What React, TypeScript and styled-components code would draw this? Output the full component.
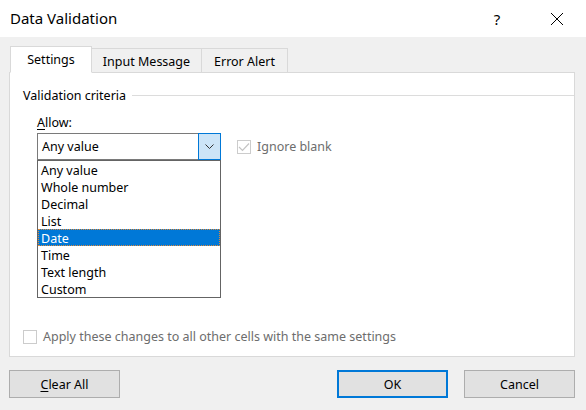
import styled, { createGlobalStyle } from 'styled-components';

const GlobalStyle = createGlobalStyle`
  html, body {
    margin: 0;
    padding: 0;
    background: #f0f0f0;
  }
  body {
    font-family: "Noto Sans", "Liberation Sans", sans-serif;
    font-size: 12.5px;
    color: #000;
  }
`;

const Dialog = styled.div`
  width: 586px;
  height: 410px;
  display: flex;
  flex-direction: column;
  background: #f0f0f0;
  overflow: hidden;
`;

const TitleBar = styled.div`
  height: 37px;
  flex: none;
  display: flex;
  align-items: center;
  background: #fff;
  padding-left: 10px;
`;

const Title = styled.div`
  flex: 1;
  font-size: 15px;
  padding-bottom: 2px;
`;

const CaptionButton = styled.div<{ $gap?: number }>`
  width: 46px;
  height: 37px;
  display: flex;
  align-items: center;
  justify-content: center;
  margin-right: ${(p) => p.$gap ?? 0}px;
  font-size: 15px;
`;

const Body = styled.div`
  flex: 1;
  display: flex;
  flex-direction: column;
  padding: 9px 11px 0 9px;
`;

const TabRow = styled.div`
  display: flex;
  align-items: flex-end;
  padding-left: 1px;
  margin-bottom: -1px;
  position: relative;
  z-index: 1;
`;

const Tab = styled.div<{ $active?: boolean; $width: number }>`
  width: ${(p) => p.$width}px;
  height: ${(p) => (p.$active ? 27 : 25)}px;
  box-sizing: border-box;
  display: flex;
  align-items: center;
  justify-content: center;
  padding-top: ${(p) => (p.$active ? 0 : 2)}px;
  border: 1px solid #d9d9d9;
  border-bottom: ${(p) => (p.$active ? '1px solid #fff' : '1px solid #d9d9d9')};
  border-left-width: ${(p) => (p.$active ? 1 : 0)}px;
  background: ${(p) => (p.$active ? '#fff' : '#f0f0f0')};
`;

const Panel = styled.div`
  height: 285px;
  box-sizing: border-box;
  border: 1px solid #d9d9d9;
  background: #fff;
  display: flex;
  flex-direction: column;
  padding: 14px 0 11px 13px;
`;

const GroupHeader = styled.div`
  display: flex;
  align-items: center;
  gap: 6px;
  &::after {
    content: '';
    flex: 1;
    height: 1px;
    background: #dcdcdc;
  }
`;

const Criteria = styled.div`
  flex: 1;
  padding: 10px 0 0 14px;
  display: flex;
  flex-direction: column;
  gap: 2px;
`;

const Mnemonic = styled.span`
  text-decoration: underline;
  text-underline-offset: 2px;
`;

const ComboRow = styled.div`
  display: flex;
  align-items: center;
  gap: 16px;
`;

const ComboWrap = styled.div`
  position: relative;
`;

const Combo = styled.div`
  width: 184px;
  height: 27px;
  box-sizing: border-box;
  border: 1px solid #7a7a7a;
  display: flex;
  align-items: stretch;
`;

const ComboValue = styled.div`
  flex: 1;
  display: flex;
  align-items: center;
  padding-left: 4px;
`;

const DropButton = styled.div`
  width: 21px;
  margin: -1px -1px -1px 0;
  border: 1px solid #0078d7;
  background: #cce4f7;
  display: flex;
  align-items: center;
  justify-content: center;
`;

const ListBox = styled.div`
  position: absolute;
  top: 27px;
  left: 0;
  width: 184px;
  box-sizing: border-box;
  border: 1px solid #646464;
  background: #fff;
`;

const ListItem = styled.div<{ $selected?: boolean }>`
  height: 17px;
  box-sizing: border-box;
  display: flex;
  align-items: center;
  padding: 1px 0 0 3px;
  background: ${(p) => (p.$selected ? '#0078d7' : 'transparent')};
  color: ${(p) => (p.$selected ? '#fff' : '#000')};
  outline: ${(p) => (p.$selected ? '1px dotted #e08a3a' : 'none')};
  outline-offset: -1px;
`;

const CheckLine = styled.div`
  display: flex;
  align-items: center;
  gap: 6px;
  color: #6d6d6d;
`;

const CheckBox = styled.div`
  width: 14px;
  height: 14px;
  box-sizing: border-box;
  border: 1px solid #cccccc;
  background: #fff;
  display: flex;
  align-items: center;
  justify-content: center;
`;

const Footer = styled.div`
  display: flex;
  padding-top: 13px;
`;

const Button = styled.div<{ $default?: boolean; $gap?: number }>`
  width: 111px;
  height: 28px;
  box-sizing: border-box;
  display: flex;
  align-items: center;
  justify-content: center;
  background: #e1e1e1;
  border: ${(p) => (p.$default ? '2px solid #0078d7' : '1px solid #adadad')};
  margin-left: ${(p) => p.$gap ?? 0}px;
`;

const options = [
  'Any value',
  'Whole number',
  'Decimal',
  'List',
  'Date',
  'Time',
  'Text length',
  'Custom',
];

function App() {
  return (
    <>
      <GlobalStyle />
      <Dialog>
        <TitleBar>
          <Title>Data Validation</Title>
          <CaptionButton $gap={14}>?</CaptionButton>
          <CaptionButton $gap={6}>
            <svg width="14" height="14" viewBox="0 0 14 14">
              <path d="M1 1 L13 13 M13 1 L1 13" stroke="#000" strokeWidth="1" />
            </svg>
          </CaptionButton>
        </TitleBar>

        <Body>
          <TabRow>
            <Tab $active $width={82}>Settings</Tab>
            <Tab $width={110}>Input Message</Tab>
            <Tab $width={86}>Error Alert</Tab>
          </TabRow>

          <Panel>
            <GroupHeader>Validation criteria</GroupHeader>
            <Criteria>
              <div>
                <Mnemonic>A</Mnemonic>llow:
              </div>
              <ComboRow>
                <ComboWrap>
                  <Combo>
                    <ComboValue>Any value</ComboValue>
                    <DropButton>
                      <svg width="9" height="6" viewBox="0 0 9 6">
                        <path d="M0.5 0.5 L4.5 4.5 L8.5 0.5" fill="none" stroke="#333" strokeWidth="1" />
                      </svg>
                    </DropButton>
                  </Combo>
                  <ListBox>
                    {options.map((o) => (
                      <ListItem key={o} $selected={o === 'Date'}>
                        {o}
                      </ListItem>
                    ))}
                  </ListBox>
                </ComboWrap>
                <CheckLine>
                  <CheckBox>
                    <svg width="12" height="10" viewBox="0 0 12 10">
                      <path d="M1 5 L4.5 8.5 L11 1.5" fill="none" stroke="#c4c4c4" strokeWidth="1.2" />
                    </svg>
                  </CheckBox>
                  Ignore blank
                </CheckLine>
              </ComboRow>
            </Criteria>
            <CheckLine>
              <CheckBox />
              Apply these changes to all other cells with the same settings
            </CheckLine>
          </Panel>

          <Footer>
            <Button>
              <span>
                <Mnemonic>C</Mnemonic>lear All
              </span>
            </Button>
            <Button $default $gap={217}>OK</Button>
            <Button $gap={16}>Cancel</Button>
          </Footer>
        </Body>
      </Dialog>
    </>
  );
}

export default App;
